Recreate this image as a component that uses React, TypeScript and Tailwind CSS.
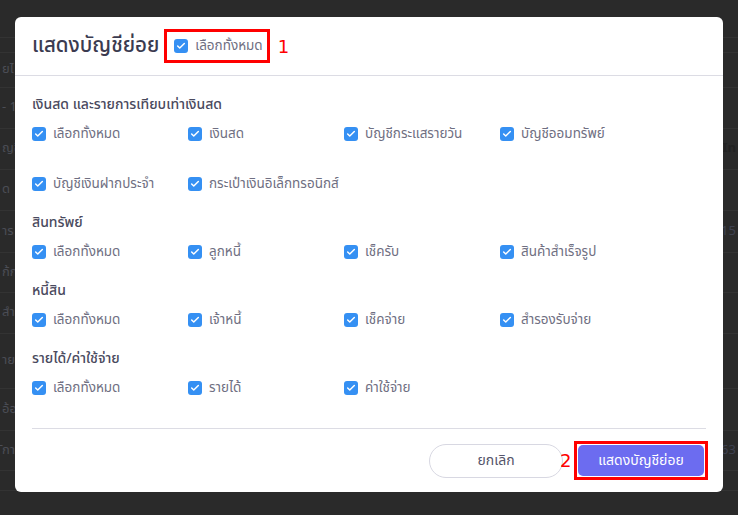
import { Check } from "lucide-react"

const font = { fontFamily: '"Noto Sans Thai", "Noto Sans", "DejaVu Sans", sans-serif' }
const digitFont = { fontFamily: '"DejaVu Sans", sans-serif' }

type Group = { title: string; items: string[] }

const groups: Group[] = [
  {
    title: "เงินสด และรายการเทียบเท่าเงินสด",
    items: ["เลือกทั้งหมด", "เงินสด", "บัญชีกระแสรายวัน", "บัญชีออมทรัพย์", "บัญชีเงินฝากประจำ", "กระเป๋าเงินอิเล็กทรอนิกส์"],
  },
  { title: "สินทรัพย์", items: ["เลือกทั้งหมด", "ลูกหนี้", "เช็ครับ", "สินค้าสำเร็จรูป"] },
  { title: "หนี้สิน", items: ["เลือกทั้งหมด", "เจ้าหนี้", "เช็คจ่าย", "สำรองรับจ่าย"] },
  { title: "รายได้/ค่าใช้จ่าย", items: ["เลือกทั้งหมด", "รายได้", "ค่าใช้จ่าย"] },
]

// faint page behind the overlay
const bgRows = [
  { h: "h-[38px]", left: "", right: "" },
  { h: "h-[15px]", left: "", right: "" },
  { h: "h-[35px]", left: "ยไ", right: "" },
  { h: "h-[41px]", left: "- 1", right: "" },
  { h: "h-[41px]", left: "ญชี", right: "In" },
  { h: "h-[41px]", left: "ด", right: "" },
  { h: "h-[42px]", left: "าร", right: "9,15" },
  { h: "h-[40px]", left: "ก้กา", right: "" },
  { h: "h-[41px]", left: "สำ", right: "" },
  { h: "h-[55px]", left: "ายล", right: "" },
  { h: "h-[42px]", left: "อ้อยั", right: "" },
  { h: "h-[40px]", left: "ักา", right: "9,63" },
  { h: "h-[20px]", left: "", right: "" },
]

function Box() {
  return (
    <span className="flex h-[14px] w-[14px] shrink-0 items-center justify-center rounded-[3px] bg-[#3590f3]">
      <Check className="h-[10px] w-[10px] text-white" strokeWidth={3.5} />
    </span>
  )
}

function Item({ label }: { label: string }) {
  return (
    <label className="flex h-[20px] items-center gap-[7px] text-[13.5px] text-[#6f6f82]">
      <Box />
      <span>{label}</span>
    </label>
  )
}

export default function App() {
  return (
    <div style={font} className="relative h-[515px] w-[738px] overflow-hidden bg-[#2a2a2a]">
      <div className="flex flex-col">
        {bgRows.map((r, i) => (
          <div key={i} className={`${r.h} flex items-center justify-between border-b border-[#333333] text-[13px]`}>
            <span className="pl-[2px] text-[#4b4d55]">{r.left}</span>
            <span className={`pr-[2px] ${r.right === "In" ? "font-bold text-[#222]" : "text-[#3e4150]"}`}>{r.right}</span>
          </div>
        ))}
      </div>

      <div className="absolute left-[15px] top-[17px] flex h-[475px] w-[708px] flex-col rounded-[6px] bg-white">
        <div className="flex h-[59px] shrink-0 items-center border-b border-[#dcdce4] pl-[17px]">
          <h2 className="text-[20.5px] font-medium text-[#3b3b50]">แสดงบัญชีย่อย</h2>
          <div className="ml-[5px] flex items-center">
            <div className="flex h-[34px] items-center gap-[7px] border-[3px] border-[#ff0000] pl-[7px] pr-[4px]">
              <Box />
              <span className="text-[13.5px] text-[#6f6f82]">เลือกทั้งหมด</span>
            </div>
            <span className="ml-[8px] text-[18px] text-[#ff0000]" style={digitFont}>1</span>
          </div>
        </div>

        <div className="flex flex-1 flex-col gap-[18px] px-[17px] pt-[18px]">
          {groups.map((g, gi) => (
            <div key={gi} className="flex flex-col gap-[10px]">
              <div className="flex h-[20px] items-center text-[14px] font-medium text-[#4a4a5e]">{g.title}</div>
              <div className={`grid w-[624px] grid-cols-4 ${gi === 0 ? "gap-y-[30px]" : ""}`}>
                {g.items.map((it, ii) => (
                  <Item key={ii} label={it} />
                ))}
              </div>
            </div>
          ))}
        </div>

        <div className="mx-[17px] flex h-[64px] shrink-0 items-center justify-end border-t border-[#dcdce4]">
          <button className="h-[34px] w-[134px] rounded-full border border-[#d8d8e2] text-[14px] text-[#55556a]">ยกเลิก</button>
          <span className="ml-[-3px] mr-[2px] w-[12px] text-[18px] text-[#ff0000]" style={digitFont}>2</span>
          <div className="mr-[-2px] border-[3px] border-[#ff0000] p-[1px]">
            <button className="h-[31px] w-[126px] rounded-[5px] bg-[#6c6cf0] text-[14px] text-white">แสดงบัญชีย่อย</button>
          </div>
        </div>
      </div>
    </div>
  )
}
